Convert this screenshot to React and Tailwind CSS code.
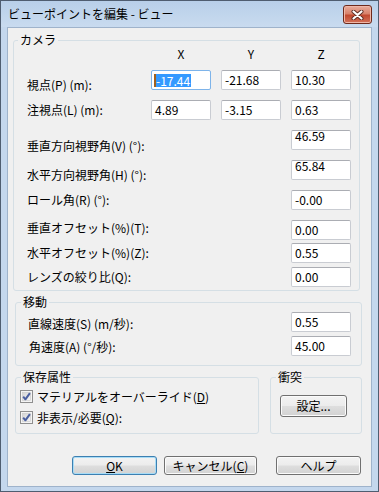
import { useState } from 'react'

const CAMERA_ROWS = [
  { label: '垂直方向視野角(V) (°):', value: '46.59', mt: 'mt-[10px]', lo: 'mt-[6px]', high: true },
  { label: '水平方向視野角(H) (°):', value: '65.84', mt: 'mt-[10px]', lo: 'mt-[5px]', high: true },
  { label: 'ロール角(R) (°):', value: '-0.00', mt: 'mt-[10px]', lo: 'mt-0' },
  { label: '垂直オフセット(%)(T):', value: '0.00', mt: 'mt-[10px]', lo: 'mt-[-2px]' },
  { label: '水平オフセット(%)(Z):', value: '0.55', mt: 'mt-[3px]', lo: 'mt-0' },
  { label: 'レンズの絞り比(Q):', value: '0.00', mt: 'mt-[4px]', lo: 'mt-0' },
]

export default function App() {
  const [hide, setHide] = useState(true)
  const [override, setOverride] = useState(true)

  return (
    <div className="flex h-[492px] w-[379px] flex-col border border-[#4f5d70] bg-[#c4d7ed] font-['Noto_Sans_CJK_JP','Noto_Sans',sans-serif] text-[12px] leading-[14px] text-black">
      {/* title bar */}
      <div className="flex h-[26px] shrink-0 items-center justify-between bg-[linear-gradient(#b8cfe9,#c9dbef)] pl-[7px] pr-[6px]">
        <span className="text-[12px] leading-[14px]">ビューポイントを編集 - ビュー</span>
        <button className="mt-[1px] flex h-[19px] w-[29px] items-center justify-center rounded-[3px] border border-[#6e2a1c] bg-[linear-gradient(#e9ad9c,#d8826b_45%,#c24a30_55%,#d2725a)] shadow-[inset_0_0_0_1px_#efb7a8]">
          <svg width="13" height="10" viewBox="0 0 13 10">
            <path d="M2.5 1.5 L10.5 8.5 M10.5 1.5 L2.5 8.5" stroke="#5b2b22" strokeWidth="4" strokeLinecap="round" />
            <path d="M2.5 1.5 L10.5 8.5 M10.5 1.5 L2.5 8.5" stroke="#ffffff" strokeWidth="2.2" strokeLinecap="round" />
          </svg>
        </button>
      </div>

      {/* client area */}
      <div className="mx-[6px] mb-[4px] flex flex-1 flex-col border border-[#9fb3cb] bg-[#f0f0f0]">
        {/* カメラ */}
        <fieldset className="ml-[5px] mt-[5px] w-[347px] rounded-[3px] border border-[#d5dfe5] pb-[3px]">
          <legend className="ml-[4px] px-[2px] leading-[14px]">カメラ</legend>
          <div className="flex h-[14px] pl-[13px] pr-[8px]">
            <div className="flex-1" />
            <div className="flex gap-[10px]">
              <span className="w-[60px] text-center">X</span>
              <span className="w-[60px] text-center">Y</span>
              <span className="w-[60px] text-center">Z</span>
            </div>
          </div>
          <Row label="視点(P) (m):" mt="mt-[9px]" lo="mt-[5px]" pl="pl-[13px]" pr="pr-[8px]">
            <Field value="-17.44" focused />
            <Field value="-21.68" />
            <Field value="10.30" />
          </Row>
          <Row label="注視点(L) (m):" mt="mt-[10px]" lo="mt-0" pl="pl-[13px]" pr="pr-[8px]">
            <Field value="4.89" />
            <Field value="-3.15" />
            <Field value="0.63" />
          </Row>
          {CAMERA_ROWS.map((r) => (
            <Row key={r.label} label={r.label} mt={r.mt} lo={r.lo} pl="pl-[13px]" pr="pr-[8px]">
              <Field value={r.value} high={r.high} />
            </Row>
          ))}
        </fieldset>

        {/* 移動 */}
        <fieldset className="ml-[7px] mt-[4px] w-[347px] rounded-[3px] border border-[#d5dfe5] pb-[9px]">
          <legend className="ml-[5px] px-[2px] leading-[14px]">移動</legend>
          <Row label="直線速度(S) (m/秒):" mt="mt-[3px]" lo="mt-[2px]" pl="pl-[12px]" pr="pr-[10px]">
            <Field value="0.55" />
          </Row>
          <Row label="角速度(A) (°/秒):" mt="mt-[4px]" lo="mt-[1px]" pl="pl-[13px]" pr="pr-[10px]">
            <Field value="45.00" />
          </Row>
        </fieldset>

        {/* 保存属性 / 衝突 */}
        <div className="mt-[4px] flex">
          <fieldset className="ml-[7px] w-[244px] rounded-[3px] border border-[#d5dfe5] pb-[9px]">
            <legend className="ml-[5px] px-[2px] leading-[14px]">保存属性</legend>
            <label className="ml-[4px] mt-[6px] flex h-[13px] items-center gap-[4px]">
              <Check checked={override} onChange={() => setOverride(!override)} />
              <span>
                マテリアルをオーバーライド(<u>D</u>)
              </span>
            </label>
            <label className="ml-[4px] mt-[8px] flex h-[13px] items-center gap-[4px]">
              <Check checked={hide} onChange={() => setHide(!hide)} />
              <span>
                非表示/必要(<u>Q</u>):
              </span>
            </label>
          </fieldset>
          <fieldset className="ml-[11px] w-[92px] rounded-[3px] border border-[#d5dfe5]">
            <legend className="ml-[5px] px-[2px] leading-[14px]">衝突</legend>
            <Btn className="ml-[9px] mt-[11px] h-[22px] w-[67px]">設定...</Btn>
          </fieldset>
        </div>

        {/* buttons */}
        <div className="mt-[22px] flex">
          <Btn def className="ml-[64px] h-[19px] w-[85px]">
            <u>O</u>K
          </Btn>
          <Btn className="ml-[7px] h-[19px] w-[93px]">
            キャンセル(<u>C</u>)
          </Btn>
          <Btn className="ml-[19px] h-[19px] w-[85px]">ヘルプ</Btn>
        </div>
      </div>
    </div>
  )
}

function Row({ label, mt, lo, pl, pr, children }) {
  return (
    <div className={`flex h-[20px] items-start ${mt} ${pl} ${pr}`}>
      <span className={`h-[20px] flex-1 whitespace-nowrap leading-[20px] ${lo}`}>{label}</span>
      <div className="flex gap-[10px]">{children}</div>
    </div>
  )
}

function Field({ value, focused, high }) {
  return (
    <div
      className={`flex h-[20px] w-[60px] items-center rounded-[2px] border bg-white pl-[2px] ${
        focused ? 'border-[#7eb4ea]' : 'border-[#c9ccd2] border-t-[#abadb3]'
      } ${high ? 'pb-[8px]' : ''}`}
    >
      {focused ? (
        <span className="flex items-center">
          <span className="h-[13px] w-[2px] bg-[#a0601f]" />
          <span className="bg-[#3399ff] pr-[1px] leading-[13px] text-white">{value}</span>
        </span>
      ) : (
        <span className="pl-[1px]">{value}</span>
      )}
    </div>
  )
}

function Check({ checked, onChange }) {
  return (
    <span onClick={onChange} className="block h-[13px] w-[13px] shrink-0">
      <svg width="13" height="13" viewBox="0 0 13 13">
        <defs>
          <linearGradient id="cbg" x1="0" y1="0" x2="1" y2="1">
            <stop offset="0" stopColor="#d4d4d4" />
            <stop offset="1" stopColor="#f6f6f6" />
          </linearGradient>
        </defs>
        <rect x="0.5" y="0.5" width="12" height="12" fill="#f4f4f4" stroke="#8f8f8f" />
        <rect x="2.5" y="2.5" width="8" height="8" fill="url(#cbg)" stroke="#c9c9c9" strokeWidth="0.6" />
        {checked && (
          <path d="M3.2 6.6 L5.4 9.3 L9.9 3.2" fill="none" stroke="#4a5fa0" strokeWidth="2" strokeLinejoin="round" />
        )}
      </svg>
    </span>
  )
}

function Btn({ def, className, children }) {
  return (
    <button
      className={`flex items-center justify-center rounded-[3px] border text-[12px] leading-[14px] text-black bg-[linear-gradient(#f3f3f3_0%,#ececec_48%,#dedede_52%,#d2d2d2_100%)] ${
        def
          ? 'border-[#3c7fb1] shadow-[inset_0_0_0_1px_#a8dcf6]'
          : 'border-[#707070] shadow-[inset_0_0_0_1px_#fbfbfb]'
      } ${className}`}
    >
      <span>{children}</span>
    </button>
  )
}
